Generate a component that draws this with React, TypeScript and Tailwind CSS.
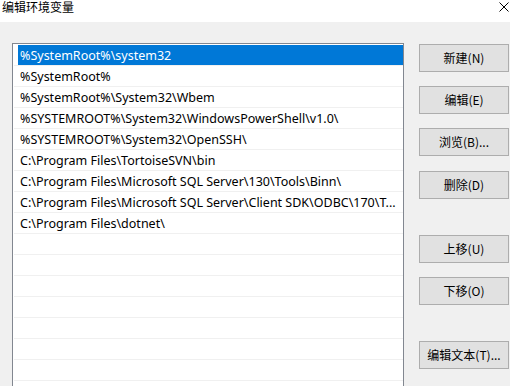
const paths = [
  '%SystemRoot%\\system32',
  '%SystemRoot%',
  '%SystemRoot%\\System32\\Wbem',
  '%SYSTEMROOT%\\System32\\WindowsPowerShell\\v1.0\\',
  '%SYSTEMROOT%\\System32\\OpenSSH\\',
  'C:\\Program Files\\TortoiseSVN\\bin',
  'C:\\Program Files\\Microsoft SQL Server\\130\\Tools\\Binn\\',
  'C:\\Program Files\\Microsoft SQL Server\\Client SDK\\ODBC\\170\\T...',
  'C:\\Program Files\\dotnet\\',
];

const rows = [...paths, ...Array(9).fill('')];

const buttons = [
  { label: '新建(N)', gap: 'mt-0' },
  { label: '编辑(E)', gap: 'mt-[14px]' },
  { label: '浏览(B)...', gap: 'mt-[14px]' },
  { label: '删除(D)', gap: 'mt-[15px]' },
  { label: '上移(U)', gap: 'mt-[36px]' },
  { label: '下移(O)', gap: 'mt-[14px]' },
  { label: '编辑文本(T)...', gap: 'mt-[36px]' },
];

export default function App() {
  return (
    <div className="h-[386px] w-[510px] overflow-hidden bg-[#f0f0f0] font-['Noto_Sans','Noto_Sans_CJK_SC',sans-serif] text-black">
      <div className="relative h-[22px] bg-white">
        <span className="absolute left-[2px] top-0 text-[12px] leading-[14px] font-['Noto_Sans_CJK_SC',sans-serif]">
          编辑环境变量
        </span>
        <svg className="absolute left-[499px] top-[2px]" width="10" height="10" viewBox="0 0 10 10">
          <path d="M0.5 0.5 L9.5 9.5 M9.5 0.5 L0.5 9.5" stroke="#000" strokeWidth="1" fill="none" />
        </svg>
      </div>

      <div className="flex">
        <div className="ml-[12px] mt-[21px] h-[420px] w-[392px] border border-[#828790] bg-white pt-[1px]">
          {rows.map((text, i) => (
            <div key={i} className="ml-[1px] w-[389px] border-b border-[#f0f0f0]">
              <div
                className={
                  'ml-[4px] h-[20px] pl-[2px] text-[12.5px] leading-[22px] whitespace-nowrap overflow-hidden ' +
                  (i === 0 ? 'bg-[#0078d7] text-white' : 'text-black')
                }
              >
                {text}
              </div>
            </div>
          ))}
        </div>

        <div className="ml-[15px] mt-[22px] flex w-[90px] flex-col">
          {buttons.map(({ label, gap }) => (
            <button
              key={label}
              className={
                gap +
                " h-[28px] w-[90px] border border-[#adadad] bg-[#e1e1e1] text-[12px] leading-none font-['Noto_Sans_CJK_SC',sans-serif]"
              }
            >
              {label}
            </button>
          ))}
        </div>
      </div>
    </div>
  );
}
